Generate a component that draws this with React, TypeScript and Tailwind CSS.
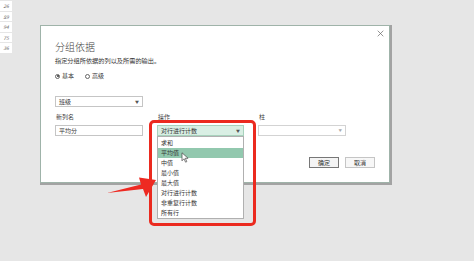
const nums = ['26', '89', '94', '75', '36'];
const ops = ['求和', '平均值', '中值', '最小值', '最大值', '对行进行计数', '非重复行计数', '所有行'];

const font = { fontFamily: '"Noto Sans CJK SC", "Noto Sans", sans-serif' };

function Caret() {
  return <span className="text-[4px] leading-none text-[#555]">▼</span>;
}

export default function App() {
  return (
    <div className="relative flex h-[261px] w-[474px] overflow-hidden bg-[#e6e6e6]" style={font}>
      {/* sheet cells behind the dialog */}
      <div className="mt-[1px] flex w-[12px] flex-col gap-[1px]">
        {nums.map((n) => (
          <div key={n} className="flex h-[9.5px] items-center justify-center bg-white text-[5px] italic text-[#666]">
            {n}
          </div>
        ))}
      </div>

      {/* dialog */}
      <div className="relative ml-[28px] mt-[25px] h-[158px] w-[350px] border border-[#9fb3a9] bg-white shadow-[1px_1px_0_1px_#a3a3a3]">
        <button className="absolute right-[5px] top-[4px] h-[7px] w-[7px]">
          <svg viewBox="0 0 10 10" className="h-full w-full" stroke="#666" strokeWidth="1">
            <path d="M1 1l8 8M9 1l-8 8" />
          </svg>
        </button>

        <div className="flex flex-col pl-[14px] pt-[14px]">
          <h1 className="text-[10px] font-light leading-[14px] text-[#444]">分组依据</h1>
          <p className="mt-[2px] text-[6.2px] leading-[10px] text-[#333]">指定分组所依据的列以及所需的输出。</p>
          <div className="mt-[6px] flex items-center gap-[11px] text-[6px] leading-[8px] text-[#333]">
            <label className="flex items-center gap-[2px]">
              <span className="flex h-[5px] w-[5px] items-center justify-center rounded-full border-[0.5px] border-[#666]">
                <span className="h-[2px] w-[2px] rounded-full bg-[#333]" />
              </span>
              基本
            </label>
            <label className="flex items-center gap-[2px]">
              <span className="h-[5px] w-[5px] rounded-full border-[0.5px] border-[#666]" />
              高级
            </label>
          </div>

          <div className="mt-[16px] flex h-[11px] w-[88px] items-center justify-between border border-[#c5c5c5] px-[3px] text-[6px] text-[#333]">
            <span>班级</span>
            <Caret />
          </div>

          <div className="mt-[6px] flex gap-[14px] text-[6px] leading-[8px] text-[#444]">
            <div className="w-[88px]">
              <div className="pl-[1px]">新列名</div>
              <div className="mt-[4px] flex h-[11px] items-center border border-[#c5c5c5] px-[3px] text-[#333]">平均分</div>
            </div>
            <div className="relative w-[87px]">
              <div className="pl-[1px]">操作</div>
              <div className="mt-[4px] flex h-[11px] items-center justify-between border border-[#a8d2bd] bg-[#d9efe4] px-[3px] text-[#333]">
                <span>对行进行计数</span>
                <Caret />
              </div>
              <ul className="absolute left-0 top-[23px] z-10 w-[87px] border border-[#b0b0b0] bg-white py-[0.5px] text-[#333]">
                {ops.map((o, i) => (
                  <li key={o} className={`flex h-[10px] items-center px-[3px] ${i === 1 ? 'bg-[#92c8ae]' : ''}`}>
                    {o}
                  </li>
                ))}
              </ul>
              <svg className="absolute left-[24px] top-[39px] z-20 h-[11px] w-[8px]" viewBox="0 0 8 11">
                <path d="M1 0.8v8l2-2 1.6 3.4 1.2-0.6-1.5-3.3h2.8z" fill="#fff" stroke="#444" strokeWidth="0.7" />
              </svg>
            </div>
            <div className="w-[88px]">
              <div className="pl-[1px]">柱</div>
              <div className="mt-[4px] flex h-[11px] items-center justify-end border border-[#d3d3d3] px-[3px]">
                <span className="text-[3.5px] leading-none text-[#aaa]">▼</span>
              </div>
            </div>
          </div>

          <div className="ml-[254px] mt-[21px] flex gap-[6px] text-[6px] text-[#333]">
            <button className="flex h-[11px] w-[30px] items-center justify-center border border-[#777] bg-[#f4f4f4]">确定</button>
            <button className="flex h-[11px] w-[30px] items-center justify-center border border-[#c5c5c5] bg-[#f7f7f7]">取消</button>
          </div>
        </div>
      </div>

      {/* red highlight */}
      <div className="absolute left-[149px] top-[120px] h-[106px] w-[107px] rounded-[5px] border-[3px] border-[#eb2a1f]" />
      <svg className="absolute left-[104px] top-[174px] h-[26px] w-[56px]" viewBox="104 174 56 26">
        <path d="M107 193 L141 184.5 L139 177.5 L156 180 L146 197 L143 189 Z" fill="#ee2a22" />
      </svg>
    </div>
  );
}
